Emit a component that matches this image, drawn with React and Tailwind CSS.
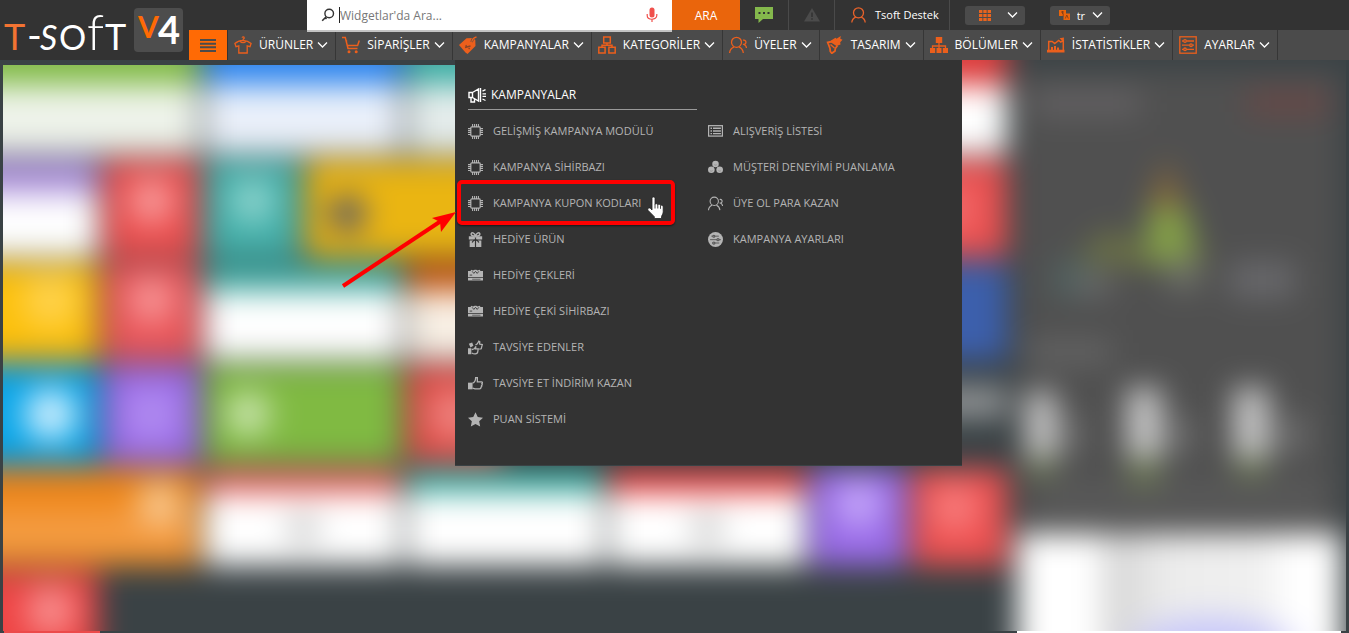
import React from "react";

const SANS = "font-['Open_Sans','Noto_Sans',sans-serif]";

function Icon({ size = 18, className = "", children }) {
  return (
    <svg
      width={size}
      height={size}
      viewBox="0 0 18 18"
      fill="none"
      stroke="currentColor"
      strokeWidth="1.3"
      className={"shrink-0 " + className}
      aria-hidden="true"
    >
      {children}
    </svg>
  );
}

function Chevron() {
  return (
    <svg width="11" height="8" viewBox="0 0 11 8" fill="none" stroke="currentColor" strokeWidth="1.3" className="shrink-0" aria-hidden="true">
      <path d="M1 1.500 5.500 6 10 1.500" />
    </svg>
  );
}

const shirt = (
  <Icon>
    <path d="M8.2 1.8a1 1 0 1 1 1.4 1c-.5.3-.6.6-.6 1.7M9 4.300C6 4.500 3 5.500.9 7.500L2 10.700l2.800-.8V17h8.400V9.900l2.800.8 1.100-3.200C15 5.500 12 4.500 9 4.300Z" />
    <path d="M6.200 5.200c1 2 4.600 2 5.600 0" />
  </Icon>
);
const cart = (
  <Icon>
    <path d="M0 1.500h3.300L6 12.500h9.500M4.200 5h1M17.300 4.500 15.600 9.500H5.500" strokeWidth="1.500" />
    <circle cx="7" cy="15.700" r="1.500" fill="currentColor" stroke="none" />
    <circle cx="14.200" cy="15.700" r="1.500" fill="currentColor" stroke="none" />
  </Icon>
);
const tag = (
  <Icon>
    <path d="M0 9 7.500 2.200l7-.2 1.800 2 .2 6-8 8L6.500 16.500Z" fill="currentColor" stroke="none" />
    <path d="M12.700 6c.3-2.500 1.500-4 3-4.700" stroke="#4b4b4b" strokeWidth="2.400" />
    <path d="M12.700 5.800c.5-2.400 1.700-4.200 4.800-4.800" />
    <path d="m6 11.500 5.500-1.500M6.700 9.300l.8.900M9.700 12l.9.900" stroke="#8b4425" strokeWidth="1.400" />
  </Icon>
);
const boxes = (
  <Icon>
    <path d="M5.700 1h6.600v6H5.700zM.8 11.200h6.300V17H.8zM10.900 11.200h6.300V17h-6.300zM9 7v2.200M4 11V9.200h10V11" strokeWidth="1.500" />
  </Icon>
);
const users = (
  <Icon>
    <circle cx="7.500" cy="6.300" r="5" />
    <path d="M.6 17c.2-3 1.700-4.800 4.300-5.800M14.300 17c-.3-3-1.700-4.800-4.200-5.800M14 4.200c2.300-.6 3.500 1.500 2.600 3.200-.5 1-1.800 1.200-2.600.8M17.500 12c-.2-1.700-.8-2.700-2.200-3.300" />
  </Icon>
);
const brush = (
  <Icon>
    <path d="m5 4.500 4.500-2.700 1 1L14.800 0l-.5 2.800 2.200 1-2.300 2.500.3 2.200-4 1.500L5 6.500Z" fill="currentColor" stroke="none" />
    <path d="M6 5.500 1.700 6.500l1 2.500L4 12.500l.3 3 1.500 1.800L9 15l.3-2.500L11.500 9.500" strokeWidth="1.800" />
    <path d="m4.500 8.500 4 3.500" strokeWidth="1.500" />
  </Icon>
);
const tree = (
  <Icon>
    <path d="M5.800 1h6.400v6H5.800zM0 12h5.200v5H0zM6.500 12h5v5h-5zM12.800 12H18v5h-5.200z" fill="currentColor" stroke="none" />
    <path d="M9 7v5.500M2.500 12.500V10h13v2.500" />
  </Icon>
);
const chart = (
  <Icon>
    <path d="M1.700 14V5.500h3.500L7.700 7.500l4-3 2 1.500 2.600-1.500V14" strokeWidth="1.500" />
    <path d="M0 13.800h17.500V16.500H0zM4 11h2v3H4zM7 10h2v4H7zM10 11.500h2V14h-2zM12.500 2.200l4.500-.7-.5 4.500Z" fill="currentColor" stroke="none" />
  </Icon>
);
const sliders = (
  <Icon>
    <rect x=".8" y=".8" width="16.400" height="16.400" />
    <path d="M3 5h1.500M7.500 5H15M3 9.200h7.500M13.500 9.200H15M3 13.300h1.500M7.500 13.300H15" />
    <circle cx="6" cy="5" r="1.300" />
    <circle cx="12" cy="9.200" r="1.300" />
    <circle cx="6" cy="13.300" r="1.300" />
  </Icon>
);

const NAV = [
  ["ÜRÜNLER", shirt],
  ["SİPARİŞLER", cart],
  ["KAMPANYALAR", tag],
  ["KATEGORİLER", boxes],
  ["ÜYELER", users],
  ["TASARIM", brush],
  ["BÖLÜMLER", tree],
  ["İSTATİSTİKLER", chart],
  ["AYARLAR", sliders],
];

const chip = (
  <Icon size={15}>
    <rect x="3.400" y="3.400" width="11.200" height="11.200" rx="1" strokeWidth="1.400" />
    <path d="M5.500 0v3.500M7.900 0v3.500M10.200 0v3.500M12.500 0v3.500M5.500 14.500V18M7.900 14.500V18M10.200 14.500V18M12.500 14.500V18M0 5.500h3.500M0 7.900h3.500M0 10.200h3.500M0 12.500h3.500M14.500 5.500H18M14.500 7.900H18M14.500 10.200H18M14.500 12.500H18" />
  </Icon>
);
const gift = (
  <Icon size={15}>
    <path d="M1 5h7.300v4H1zM9.700 5H17v4H9.700zM2 10.200h6.300V18H2zM9.700 10.200H16V18H9.700z" fill="currentColor" stroke="none" />
    <path d="M9 5C5 5 3 3.500 4 1.600 5 0 8 1.500 9 5c1-3.500 4-5 5-3.400C15 3.500 13 5 9 5Z" strokeWidth="1.600" />
    <path d="M5 12.500c1-2.200 2.500-3 4-3s3 .8 4 3" stroke="#333" strokeWidth="1.500" />
  </Icon>
);
const check = (
  <Icon size={15}>
    <path d="M0 3.500h3l1-1.500 2 1L8 2h2l1.500 1L14 2l1 1.500h3V11H0zM0 12h18v3H0z" fill="currentColor" stroke="none" />
    <path d="m5 4 2 2.500L9 4l2 2.500L13 4M2 8.500h3" stroke="#333" strokeWidth="1" />
    <path d="M5 13.500h10" stroke="#555" strokeWidth="1" />
  </Icon>
);
const thumbs = (
  <Icon size={15}>
    <path d="M0 10h4v7H0zM1 4.500l4-1.500 1.500 4L3 9Z" fill="currentColor" stroke="none" />
    <path d="M4.500 15.500c3 1.800 6.500 1.300 7-.5l.8-4.300H9l.5-3-2 2.800-3 1M9 6l2.200-1.500L13 1.500l1.200.8-.3 2.500 3.200.7-1.200 5-2.400.5" strokeWidth="1.500" />
  </Icon>
);
const thumb = (
  <Icon size={15}>
    <path d="M0 8h5.500v8H0z" fill="currentColor" stroke="none" />
    <path d="M5.500 8.500c2-.5 3.500-2.700 3.700-6.500h2v5h5c1.400 0 1.200 1.800.5 2.200.6.800.3 1.800-.4 2.200.4 1 0 1.900-.7 2.100 0 1.200-.4 2-1.800 2H8.500l-3-1" strokeWidth="1.600" />
  </Icon>
);
const star = (
  <Icon size={15}>
    <path d="m9 .3 2.700 5.800 6.300.8-4.600 4.300 1.200 6.300L9 14.400l-5.600 3.100 1.200-6.300L0 6.900l6.300-.8Z" fill="currentColor" stroke="none" />
  </Icon>
);
const list = (
  <Icon size={15}>
    <rect x=".7" y="2" width="16.600" height="12.500" strokeWidth="1.500" />
    <path d="M3 5h1.800M3 8.300h1.800M3 11.500h1.800M6 5h9.500M6 8.300h9.500M6 11.500h9.500" strokeWidth="1.700" />
  </Icon>
);
const faces = (
  <Icon size={15}>
    <g fill="currentColor" stroke="none">
      <circle cx="9" cy="4.800" r="3.900" />
      <circle cx="4" cy="11.700" r="4" />
      <circle cx="14" cy="11.700" r="4" />
    </g>
    <path d="M7.500 5.500c.8.900 2.200.9 3 0M2.500 12.700c.8.900 2.200.9 3 0M12.500 12.700c.8.900 2.200.9 3 0" stroke="#8a8a8a" strokeWidth="1" />
  </Icon>
);
const people = (
  <Icon size={15}>
    <circle cx="7.500" cy="6.300" r="5" />
    <path d="M.6 17c.2-3 1.700-4.800 4.300-5.800M14.300 17c-.3-3-1.700-4.800-4.200-5.800M14 4.200c2.300-.6 3.500 1.500 2.600 3.200-.5 1-1.800 1.200-2.600.8M17.500 12c-.2-1.700-.8-2.700-2.200-3.300" />
  </Icon>
);
const roundSliders = (
  <Icon size={15}>
    <circle cx="9" cy="9" r="9" fill="currentColor" stroke="none" />
    <path d="M4 5h9M2.500 9.200h13M5 13.200h8.500" stroke="#555" strokeWidth="1.100" />
    <g fill="currentColor" stroke="#555">
      <circle cx="7" cy="5" r="1.200" />
      <circle cx="12" cy="9.200" r="1.300" />
      <circle cx="7" cy="13.200" r="1.300" />
    </g>
  </Icon>
);

const MENU_LEFT = [
  ["GELİŞMİŞ KAMPANYA MODÜLÜ", chip],
  ["KAMPANYA SİHİRBAZI", chip],
  ["KAMPANYA KUPON KODLARI", chip, true],
  ["HEDİYE ÜRÜN", gift],
  ["HEDİYE ÇEKLERİ", check],
  ["HEDİYE ÇEKİ SİHİRBAZI", check],
  ["TAVSİYE EDENLER", thumbs],
  ["TAVSİYE ET İNDİRİM KAZAN", thumb],
  ["PUAN SİSTEMİ", star],
];
const MENU_RIGHT = [
  ["ALIŞVERİŞ LİSTESİ", list],
  ["MÜŞTERİ DENEYİMİ PUANLAMA", faces],
  ["ÜYE OL PARA KAZAN", people],
  ["KAMPANYA AYARLARI", roundSliders],
];

function Logo() {
  return (
    <svg width="189" height="60" viewBox="0 0 189 60" className="shrink-0" role="img" aria-label="T-Soft V4">
      <g fontFamily="Lato, sans-serif" fill="#fff">
        <text x="4" y="50" fontSize="36" fill="#f37332">T</text>
        <text x="27" y="50" fontSize="40">-</text>
        <text x="40" y="50" fontSize="34" fontStyle="italic">S</text>
        <text x="59" y="50" fontSize="34">O</text>
        <text x="87" y="50" fontSize="50" fontWeight="300">f</text>
        <text x="105" y="50" fontSize="36">T</text>
      </g>
      <rect x="134" y="8" width="49" height="44" rx="4" fill="#4d4d4d" />
      <g fontFamily="Lato, sans-serif" fontWeight="700">
        <text x="138" y="38" fontSize="30" fill="#ff6a05">V</text>
        <text x="158" y="44" fontSize="38" fill="#fff">4</text>
      </g>
    </svg>
  );
}

function TopBar() {
  return (
    <div className="flex h-[30px] items-stretch pl-[118px]">
      <label className="relative z-10 flex h-[32px] w-[365px] items-center border-b-2 border-[#c4c4c4] bg-white pr-[14px] pl-[14px]">
        <svg width="14" height="14" viewBox="0 0 14 14" fill="none" stroke="#333" strokeWidth="1.400" className="shrink-0" aria-hidden="true">
          <circle cx="8.200" cy="5.500" r="4.300" />
          <path d="m5.200 8.800-4 4M4 9.500l1.500 1.500" strokeWidth="1.600" />
        </svg>
        <span className="ml-1 h-4 w-px bg-[#222]" />
        <input
          type="text"
          aria-label="Widgetlar'da Ara"
          placeholder="Widgetlar'da Ara..."
          className="min-w-0 flex-1 bg-transparent pt-px text-[12px] text-[#333] outline-none placeholder:text-[#777]"
        />
        <svg width="12" height="16" viewBox="0 0 12 16" fill="none" stroke="#f0504c" strokeWidth="1.200" className="shrink-0" aria-hidden="true">
          <rect x="3.500" y=".5" width="5" height="10" rx="2.500" fill="#f0504c" stroke="none" />
          <path d="M1.200 7v1.500c0 5 9.600 5 9.600 0V7M6 12.300V15" />
        </svg>
      </label>
      <button type="button" className="w-[68px] bg-[#ea650c] pt-px text-[12px] text-white">ARA</button>
      <button type="button" aria-label="Mesajlar" className="flex w-[49px] items-center justify-center border-r border-[#4a4a4a]">
        <svg width="18" height="16" viewBox="0 0 18 16" aria-hidden="true">
          <path d="M0 0h18v12H8l-4.500 4v-4H0Z" fill="#84b84c" />
          <path d="M3.500 5h2v2h-2zM8 5h2v2H8zM12.500 5h2v2h-2z" fill="#333" />
        </svg>
      </button>
      <button type="button" aria-label="Uyarılar" className="flex w-[46px] items-center justify-center border-r border-[#4a4a4a]">
        <svg width="16" height="14" viewBox="0 0 16 14" aria-hidden="true">
          <path d="M8 0 16 13.500H0Z" fill="#4b4b4b" />
          <path d="M7.200 4.500h1.600V9H7.200zM7.200 10.200h1.600v1.600H7.200z" fill="#333" />
        </svg>
      </button>
      <button type="button" className="flex items-center gap-[9px] border-r border-[#4a4a4a] pr-[10px] pl-4 text-[11px] text-white">
        <svg width="15" height="16" viewBox="0 0 15 16" fill="none" stroke="#e8622a" strokeWidth="1.300" aria-hidden="true">
          <circle cx="7.500" cy="5.800" r="5" />
          <path d="M.8 15.500c.2-2.700 1.600-4.300 4-5.300M14.200 15.500c-.2-2.700-1.600-4.300-4-5.300" />
        </svg>
        Tsoft Destek
      </button>
      <div className="flex items-center gap-[25px] pl-[15px] text-white">
        <button type="button" aria-label="Uygulamalar" className="flex h-[19px] w-[60px] items-center justify-between rounded-[3px] bg-[#4b4b4b] pr-[7px] pl-[14px]">
          <svg width="12" height="11" viewBox="0 0 12 11" fill="#e8641e" aria-hidden="true">
            <path d="M0 0h3.400v3H0zM4.300 0h3.400v3H4.300zM8.600 0H12v3H8.600zM0 4h3.400v3H0zM4.300 4h3.400v3H4.300zM8.600 4H12v3H8.600zM0 8h3.400v3H0zM4.300 8h3.400v3H4.300zM8.600 8H12v3H8.600z" />
          </svg>
          <Chevron />
        </button>
        <label className="flex h-[19px] w-[60px] items-center rounded-[3px] bg-[#4b4b4b] pr-[7px] pl-[9px]">
          <svg width="11" height="10" viewBox="0 0 11 10" aria-hidden="true" className="shrink-0">
            <path d="M0 0h7v6H0zM4.500 3.500H11V10H4.500z" fill="#ea650c" />
            <path d="M2 2h3M3.500 1v3M6.300 8.500l1.500-3.500 1.500 3.500M4.200 3.300v3" fill="none" stroke="#7a3a18" strokeWidth=".8" />
          </svg>
          <select aria-label="Dil" className="ml-[7px] min-w-0 flex-1 appearance-none bg-transparent text-[11px] leading-[19px] outline-none" defaultValue="tr">
            <option value="tr">tr</option>
          </select>
          <Chevron />
        </label>
      </div>
    </div>
  );
}

function Header() {
  return (
    <header className="flex bg-[#333]">
      <Logo />
      <div className="min-w-0 flex-1">
        <TopBar />
        <nav className="flex h-[30px] bg-[#4b4b4b] text-[12px] text-white">
          <button type="button" aria-label="Menü" className="flex w-[38px] items-center justify-center bg-[#ff6a05]">
            <svg width="16" height="13" viewBox="0 0 16 13" fill="#4b4b4b" aria-hidden="true">
              <path d="M0 0h16v2H0zM0 3.700h16v2H0zM0 7.300h16v2H0zM0 11h16v2H0z" />
            </svg>
          </button>
          <ul className="flex border-l border-[#333]">
            {NAV.map(([label, icon]) => (
              <li key={label}>
                <a href="#" className="flex h-[30px] items-center border-r border-[#363636] pr-[7px] pl-[6px] whitespace-nowrap">
                  <span className="text-[#ec5f1c]">{icon}</span>
                  <span className="mr-1 ml-[7px]">{label}</span>
                  <Chevron />
                </a>
              </li>
            ))}
          </ul>
        </nav>
      </div>
    </header>
  );
}

function MenuList({ items }) {
  return (
    <ul className="text-[11px] text-[#b4b4b4]">
      {items.map(([label, icon, marked]) => (
        <li key={label} className="relative h-9">
          <a href="#" className="flex h-9 items-center gap-[10px] whitespace-nowrap">
            {icon}
            {label}
          </a>
          {marked && (
            <span className="pointer-events-none absolute -top-[5px] -left-[11px] h-[45px] w-[218px] rounded-[5px] border-4 border-[#ff0000] shadow-[0_1px_2px_#0008]">
              <svg width="18" height="24" viewBox="0 0 18 24" className="absolute top-[12px] right-[6px]" aria-hidden="true">
                <path
                  d="M5 2.500C5 .5 8 .5 8 2.500v6c.5-1.200 2.700-1 2.800.4.600-1 2.600-.7 2.700.7.700-.8 2.700-.4 2.700 1.200v5c0 2-1.200 3.200-1.700 4.700v2H7.300v-1.800L1.200 14.500c-1.300-1.900 1-3.300 2.300-2L5 14Z"
                  fill="#fff"
                  stroke="#222"
                  strokeWidth=".8"
                />
                <path d="M8 8.500v4M10.800 9v3.500M13.500 9.800v3" stroke="#333" strokeWidth=".9" />
              </svg>
            </span>
          )}
        </li>
      ))}
    </ul>
  );
}

function CampaignMenu() {
  return (
    <section className="relative ml-[455px] grid w-[507px] grid-cols-[229px_1fr] gap-x-[11px] border-b border-[#3a4245] bg-[#333] pt-5 pb-7 pl-[13px]">
      <div>
        <h2 className="mb-[3px] flex h-[30px] items-center gap-[5px] border-b border-[#999] text-[12px] text-white">
          <Icon>
            <path d="M1 6.500h3.500v5H1zM4.500 6.500 10.500 3v12l-6-3.500M3 11.500V16h3.500v-3.500M12.500 2v14" strokeWidth="1.400" />
            <path d="M14.500 5.200l3-1.500M14.500 7.800h3.500M14.500 10.300h3.500M14.500 13l3 1.500" strokeWidth="1.300" />
          </Icon>
          KAMPANYALAR
        </h2>
        <MenuList items={MENU_LEFT} />
      </div>
      <div className="pt-[33px]">
        <MenuList items={MENU_RIGHT} />
      </div>
      <svg width="116" height="80" viewBox="0 0 116 80" className="pointer-events-none absolute top-[150px] -left-[115px]" aria-hidden="true">
        <path d="M3 76 101 11" stroke="#ff0000" strokeWidth="4" />
        <path d="M116 2 101 22l-1-10-8-4Z" fill="#ff0000" />
      </svg>
    </section>
  );
}

/* Dashboard tiles: place = grid position, look = background */
const TILES = [
  ["row-start-1 col-span-2 col-start-1", "bg-[linear-gradient(#82bb48_64px,#eef3ea_66px)]"],
  ["row-start-1 col-span-2 col-start-3", "bg-[linear-gradient(#2f86ee_64px,#eaf0fa_66px)]"],
  ["row-start-1 col-span-2 col-start-5", "bg-[linear-gradient(#40afa6_64px,#e4eceb_66px)]"],
  ["row-start-1 col-span-2 col-start-9", "bg-[linear-gradient(#dc3c3c_64px,#ffffff_66px)]"],
  ["row-start-2 col-start-1", "bg-[linear-gradient(#a88cd8_32px,#ffffff_34px)]"],
  ["row-start-2 col-start-2", "bg-[radial-gradient(circle_at_50%_42%,#f8a8a8_10px,#ec4f4f_30px)]"],
  ["row-start-2 col-start-3", "bg-[radial-gradient(circle_at_50%_42%,#98d8d2_10px,#44b0aa_30px)]"],
  ["row-start-2 col-span-2 col-start-4", "bg-[radial-gradient(circle_at_41px_54px,#55586a_14px,#eab512_22px)]"],
  ["row-start-2 col-start-10", "bg-[radial-gradient(circle_at_40%_50%,#f07070_8px,#ec5050_36px)]"],
  ["row-start-3 col-start-1", "bg-[radial-gradient(circle_at_65%_38%,#ffd65a_8px,#fcc00c_40px)]"],
  ["row-start-3 col-start-2", "bg-[radial-gradient(circle_at_50%_38%,#f8a0a0_10px,#ea565a_30px)]"],
  ["row-start-3 col-span-2 col-start-3", "bg-[linear-gradient(#3ca69e_27px,#ffffff_29px)]"],
  ["row-start-3 col-span-2 col-start-5", "bg-[linear-gradient(#c45410_27px,#f8efe4_29px)]"],
  ["row-start-3 col-start-10", "bg-[#3c5fac]"],
  ["row-start-4 col-start-1", "bg-[radial-gradient(circle_at_65%_50%,#d4f1ff_16px,#0ca6e8_34px)]"],
  ["row-start-4 col-start-2", "bg-[radial-gradient(circle_at_50%_50%,#b08cf0_14px,#9b6ae8_40px)]"],
  ["row-start-4 col-span-2 col-start-3", "bg-[radial-gradient(circle_at_43px_48px,#d4eabe_10px,#80ba42_30px)]"],
  ["row-start-4 col-start-5", "bg-[radial-gradient(circle_at_50%_50%,#ee8682_14px,#e04c46_36px)]"],
  ["row-start-4 col-start-10", "bg-[linear-gradient(#3a4245_20px,#96999b_22px,#96999b_50px,#3a4245_52px)]"],
  ["row-start-5 col-span-2 col-start-1", "bg-[radial-gradient(circle_at_197px_34px,#f8d0a0_10px,#f0962f00_30px),linear-gradient(#ee861a_30px,#f6a24c_60px,#ee8a24)]"],
  ["row-start-5 col-span-2 col-start-3", "bg-[radial-gradient(circle_at_50%_60px,#cccccc_8px,#ffffff00_24px),linear-gradient(#e05e5a_23px,#ffffff_25px)]"],
  ["row-start-5 col-span-2 col-start-5", "bg-[linear-gradient(#38aba0_23px,#ffffff_25px)]"],
  ["row-start-5 col-span-2 col-start-7", "bg-[radial-gradient(circle_at_50%_60px,#cccccc_8px,#ffffff00_24px),linear-gradient(#e43c3c_23px,#ffffff_25px)]"],
  ["row-start-5 col-start-9", "bg-[radial-gradient(circle_at_50%_36%,#c8acfa_10px,#996ae8_34px)]"],
  ["row-start-5 col-start-10", "bg-[radial-gradient(circle_at_45%_40%,#f88484_8px,#ee5050_34px)]"],
  ["row-start-6 col-start-1", "bg-[radial-gradient(circle_at_65%_40%,#f89696_12px,#ee4444_34px)]"],
];

function StatsPanel() {
  return (
    <div className="ml-[10px] flex min-w-0 flex-1 flex-col pt-[50px]">
      <div className="h-[463px] shrink-0 bg-[#505050]">
        <svg width="326" height="463" viewBox="0 0 326 463" aria-hidden="true">
          <rect x="15" y="21" width="108" height="24" fill="#646264" />
          <rect x="230" y="21" width="82" height="24" fill="#684846" />
          <path d="M55 190 90 160l45 15 16-60 20 50 22 20-30 12-108-2Z" fill="#6a7046" />
          <path d="M130 193V145l20-40 22 40 6 48Z" fill="#84a048" />
          <path d="M132 138 149 88l18 50Z" fill="#88693a" />
          <rect x="35" y="190" width="42" height="38" fill="#50605f" />
          <rect x="60" y="205" width="35" height="20" fill="#6c6c6c" />
          <rect x="150" y="190" width="34" height="30" fill="#6e7069" />
          <rect x="212" y="192" width="66" height="36" fill="#68686b" />
          <rect x="10" y="270" width="85" height="24" fill="#646464" />
          <g fill="#cacaca">
            <rect x="9" y="322" width="30" height="68" />
            <rect x="110" y="318" width="34" height="72" />
            <rect x="217" y="318" width="34" height="72" />
          </g>
          <g fill="#66724f">
            <rect x="9" y="388" width="30" height="20" />
            <rect x="110" y="388" width="34" height="28" />
            <rect x="217" y="388" width="34" height="20" />
          </g>
          <g fill="#6a6a6a">
            <rect x="40" y="345" width="26" height="40" />
            <rect x="145" y="345" width="32" height="40" />
            <rect x="254" y="345" width="36" height="40" />
            <rect x="20" y="418" width="290" height="16" fill="#606060" />
          </g>
        </svg>
      </div>
      <div className="flex-1 bg-[radial-gradient(100px_40px_at_60%_116px,#c8c8fa_60%,#ffffff00_100%),linear-gradient(90deg,#ffffff_80px,#d4d4d4_92px,#ececec_150px,#f0f0f0_250px,#ffffff_270px)]" />
    </div>
  );
}

function Dashboard() {
  return (
    <div className="absolute inset-0 overflow-hidden bg-[#3a4245] px-[3px] pb-[2px]" aria-hidden="true">
      <div className="h-full overflow-hidden">
        <div className="-mt-10 -mr-10 -mb-10 -ml-10 flex bg-[#3a4245] pr-[44px] blur-[15px]">
          <div className="grid shrink-0 grid-cols-[135px_repeat(9,95px)] grid-rows-[134px_repeat(5,97px)] gap-[6px]">
            {TILES.map(([place, look]) => (
              <div key={place} className={place + " " + look} />
            ))}
          </div>
          <StatsPanel />
        </div>
      </div>
      <div className="absolute top-0 left-0 h-[5px] w-[455px] bg-[#3a4245]" />
      <div className="absolute inset-x-0 bottom-0 flex h-[2px] bg-[#3a4245] pr-2 pl-1">
        <span className="w-24 bg-[#ec4a4a]" />
        <span className="ml-[917px] flex-1 bg-white" />
      </div>
    </div>
  );
}

export default function App() {
  return (
    <div className={"flex min-h-screen flex-col bg-[#3a4245] " + SANS}>
      <Header />
      <main className="relative min-h-[540px] flex-1">
        <Dashboard />
        <CampaignMenu />
      </main>
    </div>
  );
}
